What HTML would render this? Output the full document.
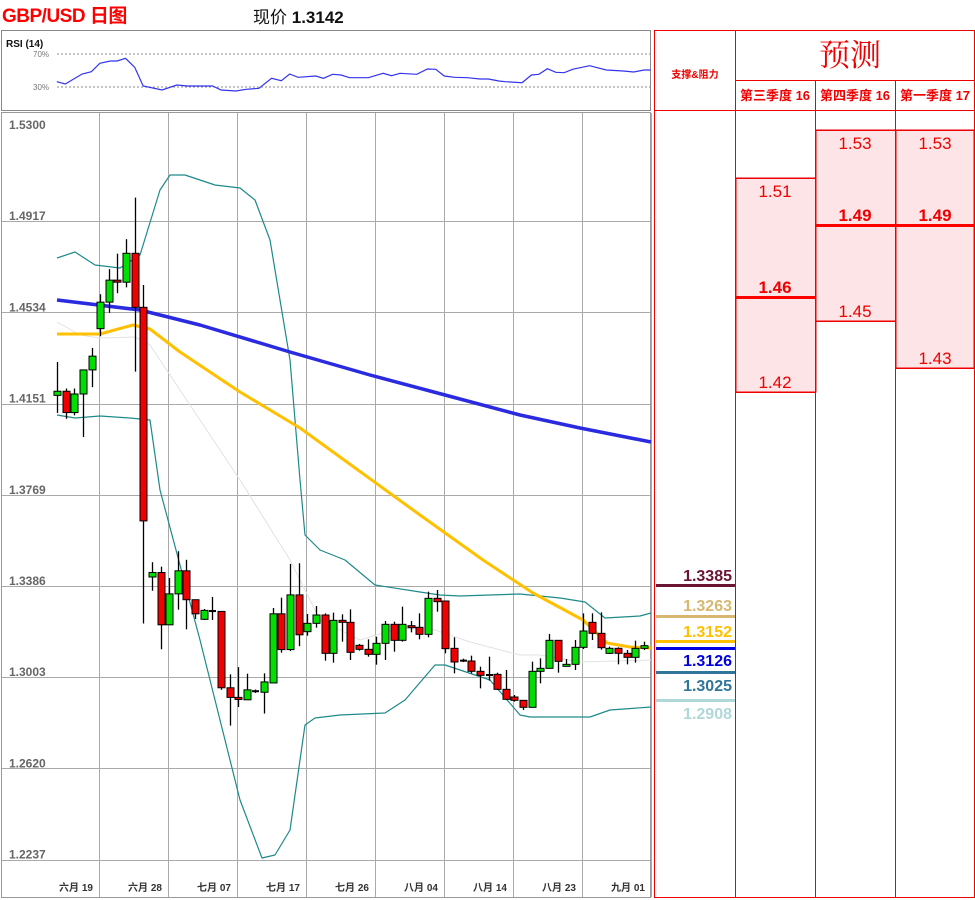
<!DOCTYPE html>
<html><head><meta charset="utf-8"><style>
body{margin:0;width:975px;height:900px;background:#fff;overflow:hidden;position:relative;font-family:"Liberation Sans","Noto Sans CJK SC",sans-serif}
.a{position:absolute}
</style></head><body>
<div class="a" style="left:2px;top:1px;color:#f00;font-weight:bold;font-size:19px;letter-spacing:-0.5px">GBP/USD 日图</div>
<div class="a" style="left:253px;top:3px;color:#111;font-size:17px">现价 <b>1.3142</b></div>
<svg class="a" style="left:0;top:0" width="975" height="900" id="s">
<rect x="1.5" y="30.5" width="649" height="80" fill="#fff" stroke="#888"/>
<text x="6" y="47" font-size="10" font-weight="bold" fill="#111" font-family="Liberation Sans">RSI (14)</text>
<line x1="57" y1="54" x2="650" y2="54" stroke="#888" stroke-dasharray="2,2"/>
<line x1="57" y1="87" x2="650" y2="87" stroke="#888" stroke-dasharray="2,2"/>
<text x="33" y="57" font-size="8" fill="#777" font-family="Liberation Sans">70%</text>
<text x="33" y="90" font-size="8" fill="#777" font-family="Liberation Sans">30%</text>
<rect x="1.5" y="112.5" width="649" height="785" fill="#fff" stroke="#999"/>
<g id="grid" stroke="#aaa" stroke-width="1"></g>
<g id="lbl" font-family="Liberation Sans" font-weight="bold"></g>
<g id="lines" fill="none"></g>
<g id="cd"></g>
<g stroke="#e00" stroke-width="1">
<rect x="654.5" y="30.5" width="320" height="867" fill="#fff"/>
<rect x="736" y="178" width="80" height="214" fill="#fde4e6"/>
<rect x="816" y="130" width="80" height="191" fill="#fde4e6"/>
<rect x="896" y="130" width="78" height="238" fill="#fde4e6"/>
<line x1="735.5" y1="30" x2="735.5" y2="898"/>
<line x1="815.5" y1="80" x2="815.5" y2="898"/>
<line x1="895.5" y1="80" x2="895.5" y2="898"/>
<line x1="735" y1="80.5" x2="975" y2="80.5"/>
<line x1="654" y1="110.5" x2="975" y2="110.5"/>
<line x1="735" y1="178.5" x2="815" y2="178.5"/>
<line x1="735" y1="392.5" x2="815" y2="392.5"/>
<line x1="815" y1="130.5" x2="975" y2="130.5"/>
<line x1="815" y1="321.5" x2="895" y2="321.5"/>
<line x1="895" y1="368.5" x2="975" y2="368.5"/>
</g>
<rect x="736" y="296" width="80" height="3" fill="#f00"/>
<rect x="816" y="224" width="159" height="3" fill="#f00"/>
<g font-family="Liberation Sans" fill="#e00" text-anchor="middle">
<text x="695" y="78" font-size="10" font-weight="bold" font-family="Liberation Sans,Noto Sans CJK SC,sans-serif">支撑&amp;阻力</text>
<text x="850" y="66" font-size="31" font-family="Liberation Serif,Noto Serif CJK SC,serif">预测</text>
<text x="775" y="100" font-size="13" font-weight="bold" font-family="Liberation Sans,Noto Sans CJK SC,sans-serif">第三季度 16</text>
<text x="855" y="100" font-size="13" font-weight="bold" font-family="Liberation Sans,Noto Sans CJK SC,sans-serif">第四季度 16</text>
<text x="935" y="100" font-size="13" font-weight="bold" font-family="Liberation Sans,Noto Sans CJK SC,sans-serif">第一季度 17</text>
<g font-size="17"><text x="775" y="197">1.51</text><text x="775" y="293" font-weight="bold">1.46</text><text x="775" y="388">1.42</text>
<text x="855" y="149">1.53</text><text x="855" y="221" font-weight="bold">1.49</text><text x="855" y="317">1.45</text>
<text x="935" y="149">1.53</text><text x="935" y="221" font-weight="bold">1.49</text><text x="935" y="364">1.43</text></g>
</g>
<g font-family="Liberation Sans" font-weight="bold" font-size="16" text-anchor="end">
<rect x="656" y="584" width="79" height="3" fill="#6b1535"/><text x="732" y="581" fill="#6b1535">1.3385</text>
<rect x="656" y="615" width="79" height="3" fill="#d8b870"/><text x="732" y="611" fill="#d8b870">1.3263</text>
<rect x="656" y="640" width="79" height="3" fill="#ffc000"/><text x="732" y="637" fill="#ffc000">1.3152</text>
<rect x="656" y="647" width="79" height="3" fill="#0000e0"/><text x="732" y="666" fill="#0000e0">1.3126</text>
<rect x="656" y="671" width="79" height="3" fill="#31759a"/><text x="732" y="691" fill="#31759a">1.3025</text>
<rect x="656" y="699" width="79" height="3" fill="#b0d8d8"/><text x="732" y="719" fill="#b0d8d8">1.2908</text>
</g>
</svg>
<script>
var NS="http://www.w3.org/2000/svg";
function el(p,t,a){var e=document.createElementNS(NS,t);for(var k in a)e.setAttribute(k,a[k]);p.appendChild(e);return e}
var g=document.getElementById('grid'),L=document.getElementById('lbl'),ln=document.getElementById('lines'),cd=document.getElementById('cd');
var labs=["1.5300","1.4917","1.4534","1.4151","1.3769","1.3386","1.3003","1.2620","1.2237"];
for(var i=0;i<9;i++){var y=130+i*91.2;if(i>0)el(g,'line',{x1:2,x2:650,y1:Math.round(y)+.5,y2:Math.round(y)+.5});
var t=el(L,'text',{x:9,y:y-1,'font-size':12,fill:'#666'});t.textContent=labs[i];}
var dates=["六月 19","六月 28","七月 07","七月 17","七月 26","八月 04","八月 14","八月 23","九月 01"];
for(i=0;i<9;i++){var x=99+i*69;el(g,'line',{x1:x+.5,x2:x+.5,y1:113,y2:897});
var t=el(L,'text',{x:x-23,y:891,'font-size':10,fill:'#333','text-anchor':'middle','font-family':'Liberation Sans,Noto Sans CJK SC,sans-serif'});t.textContent=dates[i];}
function pl(pts,c,w){el(ln,'polyline',{points:pts.map(function(p){return p.join(',')}).join(' '),stroke:c,'stroke-width':w,fill:'none','stroke-linejoin':'round'})}
pl([[57,322],[80,335],[100,338],[135,337],[150,345],[200,420],[240,480],[290,560],[320,620],[360,640],[400,628],[435,630],[470,642],[520,655],[540,655],[580,662],[651,660]],'#e2e2e2',1);
pl([[57,258],[75,252],[95,265],[120,268],[140,255],[160,190],[170,175],[185,175],[215,185],[240,188],[255,200],[270,240],[290,360],[300,480],[305,535],[320,550],[345,560],[375,585],[420,592],[440,595],[460,596],[490,595],[520,594],[560,598],[585,602],[605,618],[640,616],[651,613]],'#1e8a8a',1.2);
pl([[57,415],[75,418],[100,416],[130,418],[150,420],[160,490],[200,640],[240,800],[262,858],[275,855],[290,830],[300,760],[305,725],[315,718],[340,715],[385,713],[405,700],[435,665],[445,665],[490,680],[520,715],[530,717],[590,717],[610,710],[651,707]],'#1e8a8a',1.2);
pl([[57,300],[140,310],[200,325],[290,352],[370,375],[445,395],[520,415],[580,428],[651,442]],'#2a2ae0',3.5);
pl([[57,334],[100,334],[133,325],[150,329],[180,352],[210,372],[240,392],[300,428],[340,457],[420,515],[483,560],[533,593],[583,620],[607,643],[630,647],[651,648]],'#ffc000',3);
var r=[[135,245],[155,252],[195,222],[217,215],[237,190],[262,183],[278,183],[298,175],[320,202],[340,258],[385,270],[420,255],[445,258],[505,258],[525,270],[560,273],[585,268],[615,265],[645,235],[668,242],[688,222],[708,232],[750,228],[768,235],[790,223],[810,225],[830,233],[875,233],[910,220],[930,227],[950,220],[990,223],[1015,207],[1035,208],[1055,228],[1080,232],[1110,233],[1140,237],[1160,237],[1185,243],[1200,245],[1240,248],[1262,225],[1280,223],[1300,206],[1320,217],[1340,218],[1360,208],[1400,197],[1440,210],[1480,213],[1505,216],[1530,210],[1545,210]];
el(ln,'polyline',{points:r.map(function(p){return (p[0]/2.375).toFixed(1)+','+(p[1]/3).toFixed(1)}).join(' '),stroke:'#3333ee','stroke-width':1.2,fill:'none'});
function z4(v){return 190+v*0.344}function z5(v){return 560+v/3}
var A=[[585,597,500,648,'G'],[585,647,577,665,'R'],[593,647,577,655,'G'],[523,593,523,718,'G'],[483,523,459,573,'G'],[326,403,303,425,'G'],[262,326,230,357,'G'],[262,268,185,300,'R'],[184,268,143,283,'G'],[184,341,22,528,'R'],[341,962,276,1260,'R'],[1112,1125,1082,1165,'G'],[1112,1264,1095,1335,'R'],[1174,1264,1128,1264,'G'],[1107,1174,1050,1220,'G'],[1107,1191,1075,1277,'R'],[1191,1232,1191,1247,'R'],[1222,1248,1218,1250,'G'],[1224,1224,1183,1250,'D'],[1225,1447,1225,1453,'R'],[1447,1475,1408,1557,'R'],[1475,1481,1387,1503,'R'],[1453,1482,1406,1482,'G'],[1457,1457,1452,1462,'D'],[1430,1460,1405,1522,'G'],[1232,1433,1215,1433,'G'],[1232,1336,1185,1345,'R'],[1177,1336,1087,1340,'G'],[1177,1293,1085,1326,'R']];
var B=[[190,215,162,227,'G'],[165,190,138,203,'G'],[165,280,160,302,'R'],[181,280,158,308,'G'],[181,187,163,245,'R'],[187,277,148,300,'R'],[256,268,252,272,'R'],[268,283,238,290,'R'],[250,283,230,314,'G'],[193,250,183,300,'G'],[193,241,185,275,'R'],[193,241,140,245,'G'],[197,203,183,217,'R'],[202,223,160,238,'R'],[115,223,95,232,'G'],[115,125,90,155,'R'],[123,266,122,280,'R'],[265,306,232,340,'R'],[302,302,296,306,'D'],[303,334,287,340,'R'],[334,346,320,385,'R'],[345,345,290,362,'D'],[343,388,338,390,'R'],[388,418,330,420,'R'],[411,421,405,425,'R'],[421,442,423,450,'R'],[334,442,305,442,'G'],[325,334,295,370,'G'],[241,325,222,325,'G'],[241,304,241,338,'R'],[313,319,297,320,'G'],[262,313,240,330,'G'],[213,262,160,267,'G'],[187,220,160,240,'R'],[220,263,157,269,'R'],[265,280,260,282,'G'],[265,280,262,313,'R'],[280,292,270,313,'R'],[265,292,242,308,'G'],[257,265,245,270,'G']];
function draw(d,i,f){var x=Math.round(57+8.63*i);var t=f(d[0]),b=f(d[1]),h=f(d[2]),l=f(d[3]);
el(cd,'line',{x1:x+.5,x2:x+.5,y1:h,y2:l,stroke:'#000','stroke-width':1.3});
if(d[4]=='D'){el(cd,'line',{x1:x-3,x2:x+4,y1:t,y2:t,stroke:'#000','stroke-width':2});return}
el(cd,'rect',{x:x-3,y:t,width:7,height:Math.max(b-t,2),fill:d[4]=='G'?'#00e000':'#f00000',stroke:'#000','stroke-width':1});}
A.forEach(function(d,i){draw(d,i,z4)});B.forEach(function(d,i){draw(d,i+29,z5)});
</script>
</body></html>
